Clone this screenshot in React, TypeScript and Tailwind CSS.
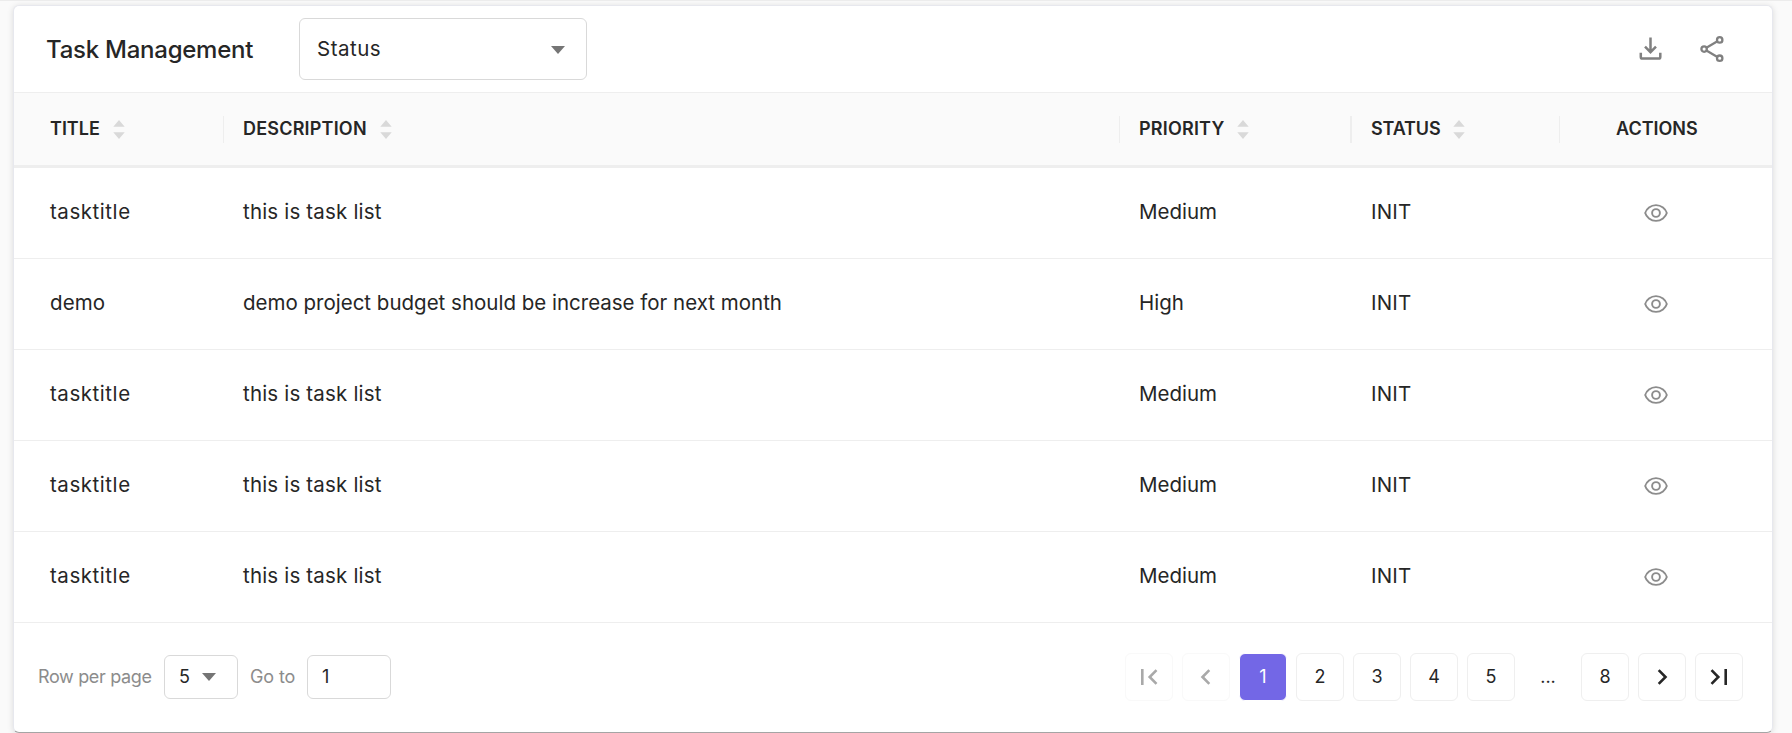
import React from "react";

const rows = [
  { title: "tasktitle", description: "this is task list", priority: "Medium", status: "INIT" },
  { title: "demo", description: "demo project budget should be increase for next month", priority: "High", status: "INIT" },
  { title: "tasktitle", description: "this is task list", priority: "Medium", status: "INIT" },
  { title: "tasktitle", description: "this is task list", priority: "Medium", status: "INIT" },
  { title: "tasktitle", description: "this is task list", priority: "Medium", status: "INIT" },
];

const grid = "grid grid-cols-[193px_896px_232px_208px_1fr]";

function Caret() {
  return (
    <svg width="14" height="8" viewBox="0 0 14 8" fill="#757575">
      <path d="M0 0h14L7 8z" />
    </svg>
  );
}

function Sorter() {
  return (
    <svg width="12" height="19" viewBox="0 0 12 19" fill="#d9d9d9">
      <path d="M6 0l5.700 6.700H0.300zM0.300 12.300h11.400L6 19z" />
    </svg>
  );
}

function DownloadIcon() {
  return (
    <svg width="24" height="24" viewBox="0 0 24 24" fill="none" stroke="#808080" strokeWidth="2.500">
      <path d="M11.500 0.500v15M6 9.700l5.500 5.500L17 9.700M1.800 15.700v4.300q0 1.600 1.600 1.600h16.300q1.600 0 1.600-1.600V15.700" />
    </svg>
  );
}

function ShareIcon() {
  return (
    <svg width="24" height="27" viewBox="0 0 24 27" fill="none" stroke="#808080" strokeWidth="2.300">
      <circle cx="19.700" cy="3.900" r="2.700" />
      <circle cx="4.100" cy="13.100" r="2.700" />
      <circle cx="19.700" cy="22.200" r="2.700" />
      <path d="M6.400 11.700l11-6.400M6.400 14.500l11 6.400" />
    </svg>
  );
}

function EyeIcon() {
  return (
    <svg width="24" height="18" viewBox="0 0 24 18" fill="none" stroke="#8c8c8c" strokeWidth="1.900">
      <path d="M1.200 9C2.300 5 6.700 1.100 12 1.100S21.700 5 22.800 9c-1.100 4-5.500 7.900-10.800 7.900S2.300 13 1.200 9z" />
      <circle cx="12" cy="9" r="3.900" />
    </svg>
  );
}

function HeadCell({ label, tracking = "", divider = "mr-[19px] w-px" }: { label: string; tracking?: string; divider?: string }) {
  return (
    <div className="flex items-center justify-between">
      <div className="flex items-center gap-[13px]">
        <span className={tracking}>{label}</span>
        <Sorter />
      </div>
      <div className={"h-[27px] bg-[#eeeeee] " + divider} />
    </div>
  );
}

function PageButton({ children, kind = "normal" }: { children: React.ReactNode; kind?: "normal" | "active" | "disabled" | "gap" }) {
  const styles = {
    normal: "border border-[#efefef]",
    active: "border border-white bg-[#7367e6] text-white",
    disabled: "border border-[#f9f9f9] text-[#a9a9a9]",
    gap: "",
  };
  return <div className={"flex h-12 w-12 items-center justify-center rounded-md " + styles[kind]}>{children}</div>;
}

function Chevron({ dir, bar }: { dir: "left" | "right"; bar?: boolean }) {
  return (
    <svg width="18" height="16" viewBox="0 0 18 16" fill="none" stroke="currentColor" strokeWidth="2.600" className={dir === "left" ? "-scale-x-100" : ""}>
      {bar ? <path d="M1.500 1.200L8.300 8l-6.800 6.800M15.700 0v16" /> : <path d="M5.700 1.200L12.500 8l-6.800 6.800" />}
    </svg>
  );
}

export default function App() {
  return (
    <div className="h-[733px] overflow-hidden border-t border-[#ececec] bg-[#fafafa] pl-[13px] pt-1 font-['Inter','Liberation_Sans',sans-serif] text-[#262626]">
      <div className="h-[728px] w-[1760px] rounded-[6px] border border-[#e7e8ee] border-b-[#a5a5a5] bg-white shadow-[0_1px_6px_rgba(0,0,0,0.13)]">
        <header className="flex h-[86px] items-center pl-[32px] pr-12">
          <h1 className="w-[253px] pt-px text-2xl font-medium tracking-[-0.25px]">Task Management</h1>
          <div className="flex h-[62px] w-[288px] items-center justify-between rounded-md border border-[#d9d9d9] pl-[17px] pr-[21px] text-[20.5px]">
            <span className="tracking-[0.5px]">Status</span>
            <div className="pt-px"><Caret /></div>
          </div>
          <div className="ml-auto flex items-center gap-[37px]">
            <DownloadIcon />
            <ShareIcon />
          </div>
        </header>
        <div className={grid + " h-[76px] items-center border-t border-b-[3px] border-[#eeeeee] bg-[#fafafa] pl-[36px] text-lg font-semibold"}>
          <HeadCell label="TITLE" />
          <HeadCell label="DESCRIPTION" tracking="tracking-[0.2px]" />
          <HeadCell label="PRIORITY" tracking="tracking-[0.2px]" divider="mr-[19px] w-0.5" />
          <HeadCell label="STATUS" tracking="tracking-[-0.15px]" />
          <div className="pl-[37px]">ACTIONS</div>
        </div>
        {rows.map((row, i) => (
          <div key={i} className={grid + " h-[91px] items-center border-b border-[#eeeeee] pl-[36px] text-[20.5px]"}>
            <span className={row.title === "demo" ? "pb-0.5 tracking-[0.1px]" : "pb-0.5 tracking-[0.55px]"}>{row.title}</span>
            <span className={row.description.length > 20 ? "pb-0.5" : "pb-0.5 tracking-[0.18px]"}>{row.description}</span>
            <span className="pb-0.5">{row.priority}</span>
            <span className="pb-0.5 tracking-[0.2px]">{row.status}</span>
            <div className="pl-[65px]"><EyeIcon /></div>
          </div>
        ))}
        <footer className="flex h-[108px] items-center pl-6 pr-[29px] text-lg">
          <span className="w-[126px] tracking-[-0.35px] text-[#8c8c8c]">Row per page</span>
          <div className="flex h-11 w-[74px] items-center gap-3 rounded-md border border-[#d9d9d9] pl-[14px]">
            <span>5</span>
            <Caret />
          </div>
          <span className="ml-3 w-[57px] tracking-[-0.1px] text-[#8c8c8c]">Go to</span>
          <div className="flex h-11 w-[84px] items-center rounded-md border border-[#d9d9d9] pl-[14px]">1</div>
          <nav className="ml-auto flex gap-[9px]">
            <PageButton kind="disabled"><Chevron dir="left" bar /></PageButton>
            <PageButton kind="disabled"><Chevron dir="left" /></PageButton>
            <PageButton kind="active">1</PageButton>
            <PageButton>2</PageButton>
            <PageButton>3</PageButton>
            <PageButton>4</PageButton>
            <PageButton>5</PageButton>
            <PageButton kind="gap">...</PageButton>
            <PageButton>8</PageButton>
            <PageButton><Chevron dir="right" /></PageButton>
            <PageButton><Chevron dir="right" bar /></PageButton>
          </nav>
        </footer>
      </div>
    </div>
  );
}
